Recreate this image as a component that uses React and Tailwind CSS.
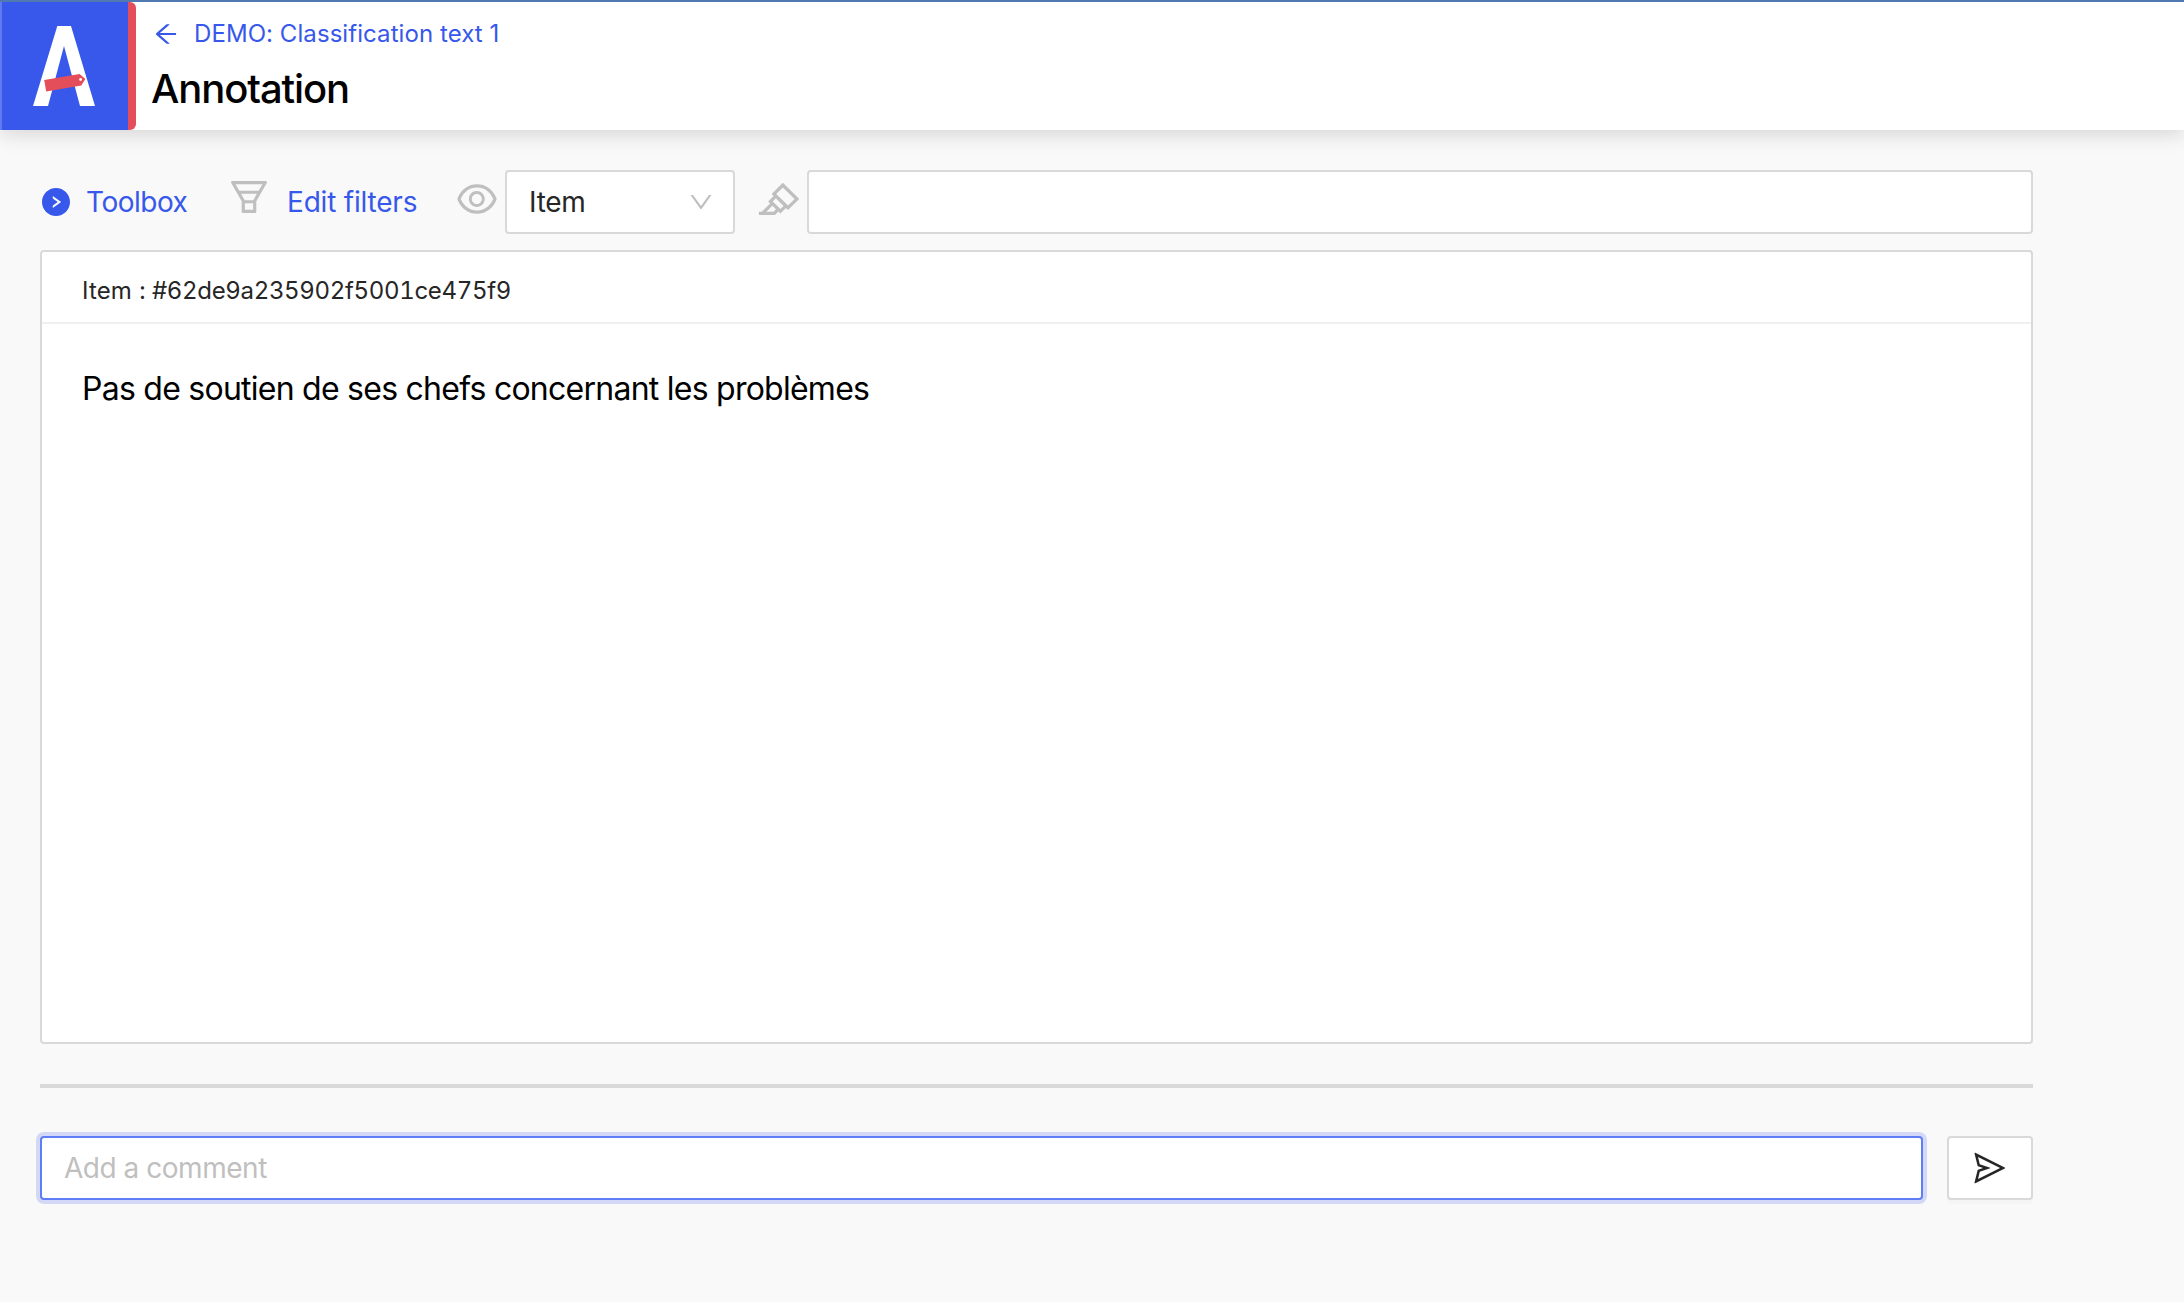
import {
  AiFillRightCircle,
  AiOutlineArrowLeft,
  AiOutlineDown,
  AiOutlineEye,
  AiOutlineFunnelPlot,
  AiOutlineHighlight,
  AiOutlineSend,
} from "react-icons/ai";

function Logo() {
  return (
    <div className="flex h-32 w-[136px] shrink-0 rounded-r-[6px] bg-[#e44e5b]">
      <div className="h-32 w-0.5 bg-[#6079ef]" />
      <svg className="h-32 w-[126px] bg-[#3758ea]" viewBox="2 2 126 128" aria-hidden="true">
        <path fill="#fff" d="M57.3 26H71L95 106H80L64 46L48 106H33Z" />
        <path fill="#e44e5b" d="M44.2 80L79.6 74L85.4 79L81.3 85.6L46.2 91.6Z" />
        <circle cx="80.6" cy="79.5" r="1.4" fill="#fff" />
      </svg>
    </div>
  );
}

function Header() {
  return (
    <header className="relative flex h-[130px] border-t-2 border-[#4f79b0] bg-white shadow-[0_4px_20px_rgba(0,0,0,0.15)]">
      <Logo />
      <div className="flex flex-col pl-4">
        <a className="mt-3 flex h-10 items-center text-[24px] leading-10 text-[#3758ea]">
          <AiOutlineArrowLeft className="size-7 shrink-0" />
          <span className="ml-3.5 tracking-[0.07px] whitespace-nowrap">DEMO: Classification text 1</span>
        </a>
        <h1 className="mt-[9px] -ml-px text-[40px] leading-[52px] font-medium tracking-[-1.1px] text-black">Annotation</h1>
      </div>
    </header>
  );
}

function Toolbar() {
  return (
    <div className="flex h-16 items-center text-[28px] text-[#3758ea]">
      <AiFillRightCircle className="size-8 shrink-0" />
      <span className="ml-[14px] w-[140px] tracking-[-0.5px] whitespace-nowrap">Toolbox</span>
      <AiOutlineFunnelPlot className="mb-[11px] size-[46px] shrink-0 text-[#bfbfbf]" />
      <span className="ml-[15px] w-[167px] tracking-[-0.2px] whitespace-nowrap">Edit filters</span>
      <AiOutlineEye className="mb-1.5 size-[46px] shrink-0 text-[#bfbfbf]" />
      <div className="ml-[5px] flex h-16 w-[230px] shrink-0 items-center justify-between rounded-[4px] border-2 border-[#d9d9d9] bg-white pr-[18px] pl-[22px] text-[#262626]">
        <span className="tracking-[-0.3px]">Item</span>
        <AiOutlineDown className="size-7 text-[#bfbfbf]" />
      </div>
      <AiOutlineHighlight className="mb-[7px] ml-[21px] size-[46px] shrink-0 text-[#bfbfbf]" />
      <input className="ml-[5px] h-16 min-w-0 flex-1 rounded-[4px] border-2 border-[#d9d9d9] bg-white px-5 outline-none" />
    </div>
  );
}

function ItemCard() {
  return (
    <section className="mt-4 h-[794px] rounded-[4px] border-2 border-[#d9d9d9] bg-white">
      <div className="flex h-[72px] items-center gap-[6px] border-b-2 border-[#f0f0f0] px-10 pt-[8px] text-[24px] text-[#262626]">
        <span className="tracking-[0.15px]">Item :</span>
        <span className="tracking-[-0.34px] tabular-nums">#62de9a235902f5001ce475f9</span>
      </div>
      <p className="px-10 pt-10 text-[32px] leading-[50px] tracking-[-0.75px] text-black">
        Pas de soutien de ses chefs concernant les problèmes
      </p>
    </section>
  );
}

function CommentForm() {
  return (
    <div className="mt-12 flex gap-6">
      <input
        className="h-16 min-w-0 flex-1 rounded-[4px] border-2 border-[#5f7df6] bg-white px-[22px] text-[28px] tracking-[-0.47px] shadow-[0_0_0_4px_#d2d8f6] outline-none placeholder:text-[#bfbfbf]"
        placeholder="Add a comment"
      />
      <button className="flex h-16 w-[86px] items-center justify-center rounded-[4px] border-2 border-[#d9d9d9] bg-white text-[#262626] shadow-[0_4px_0_rgba(0,0,0,0.016)]">
        <AiOutlineSend className="size-9" />
      </button>
    </div>
  );
}

export default function App() {
  return (
    <div className="h-[1302px] w-[2184px] overflow-hidden bg-[#f9f9f9] font-['Inter',sans-serif]">
      <Header />
      <main className="ml-10 w-[1993px] pt-10">
        <Toolbar />
        <ItemCard />
        <hr className="mt-10 h-1 border-0 bg-[#d9d9d9]" />
        <CommentForm />
      </main>
    </div>
  );
}
